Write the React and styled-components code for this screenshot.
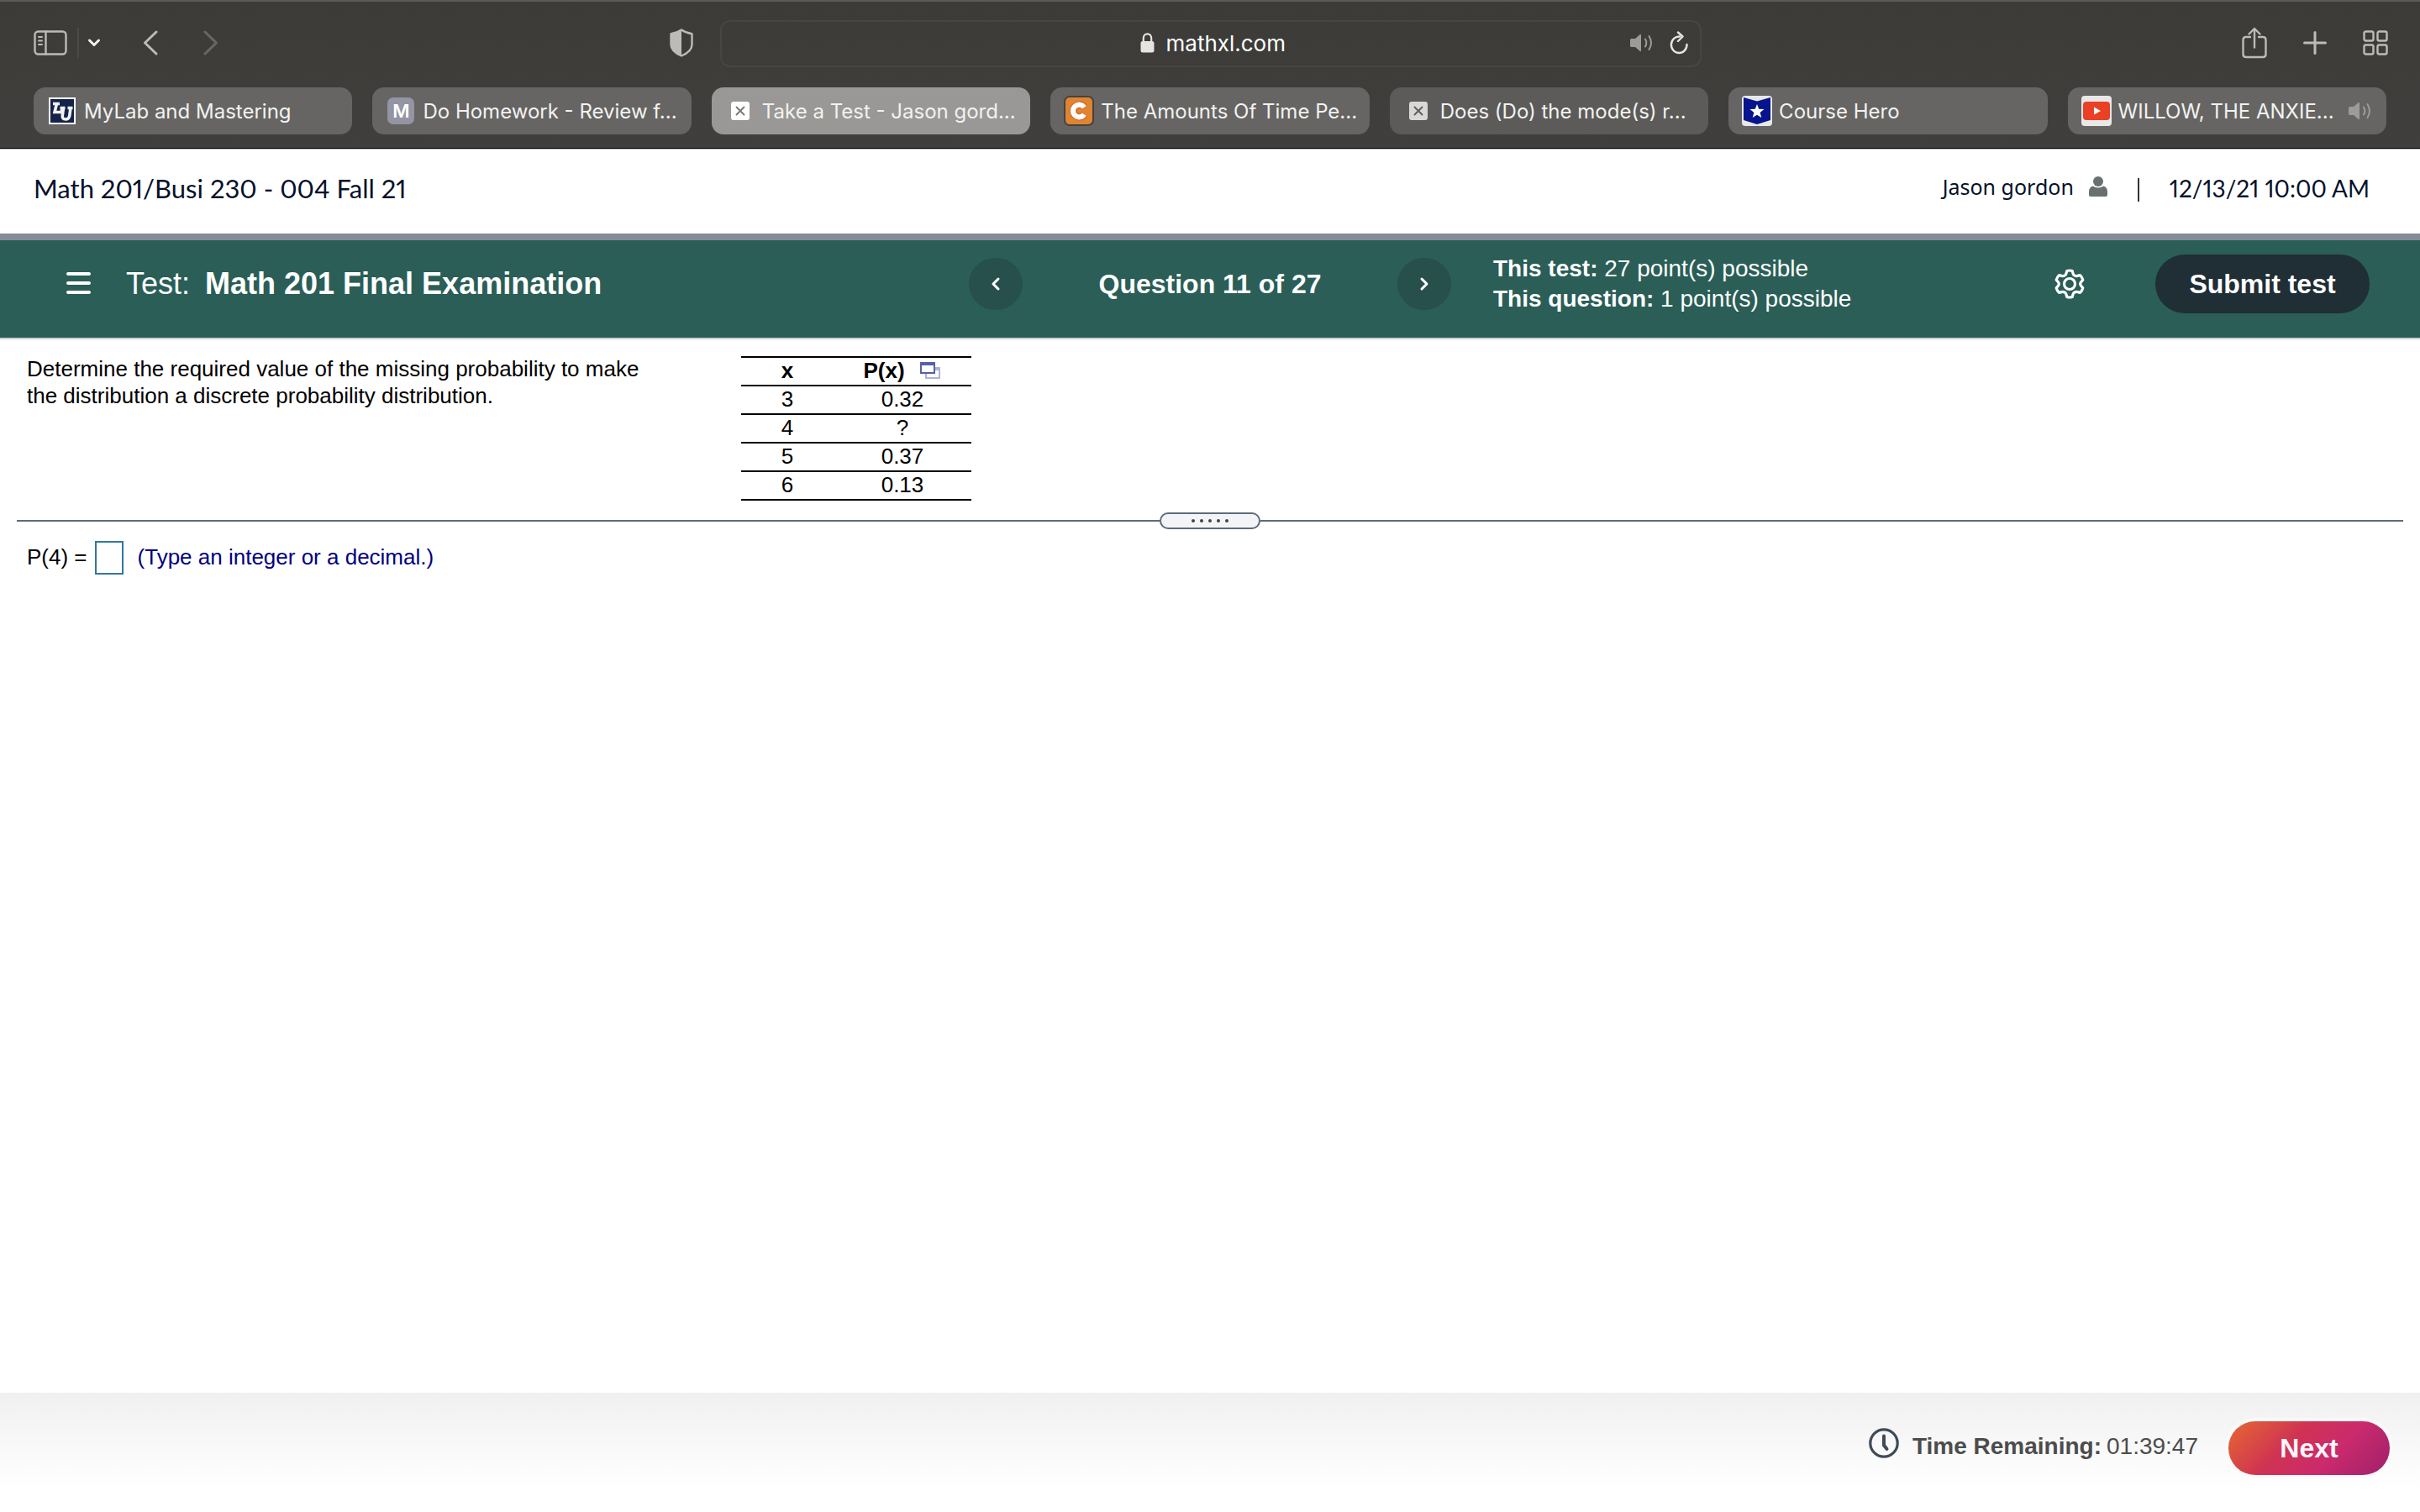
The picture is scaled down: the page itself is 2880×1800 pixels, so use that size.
import React, { useState } from 'react';
import styled, { createGlobalStyle } from 'styled-components';

const GlobalStyle = createGlobalStyle`
  * {
    box-sizing: border-box;
  }

  body {
    margin: 0;
    background: #fff;
    color: #000;
    font-family: "Liberation Sans", Arial, sans-serif;
    font-size: 26px;
  }

  button, input {
    font: inherit;
    color: inherit;
  }

  svg {
    display: block;
    flex-shrink: 0;
  }
`;

const Page = styled.div`
  min-height: 100vh;
  display: flex;
  flex-direction: column;
`;

/* Browser window */

const BrowserChrome = styled.header`
  height: 178px;
  background: linear-gradient(#3c3b38, #403f3d);
  border-top: 2px solid #5b5a58;
  border-bottom: 1px solid #bdbdbd;
  box-shadow: inset 0 -1px 0 #000;
  font-family: Inter, "Liberation Sans", sans-serif;
`;

const Toolbar = styled.div`
  height: 102px;
  padding: 0 38px 2px 40px;
  display: grid;
  grid-template-columns: 7fr 10fr 7fr;
  align-items: center;
`;

const ToolGroup = styled.div`
  display: flex;
  align-items: center;
  justify-content: ${({ $end }) => ($end ? 'flex-end' : 'flex-start')};
  gap: ${({ $gap }) => $gap || 0}px;
  padding-bottom: 2px;
`;

const IconButton = styled.button`
  display: flex;
  align-items: center;
  justify-content: center;
  padding: 0;
  border: none;
  background: none;
  color: ${({ $color }) => $color || '#bcbbb9'};
  cursor: pointer;
`;

const ToolDivider = styled.span`
  width: 2px;
  height: 36px;
  margin: 0 10px 0 12px;
  background: #4b4a48;
`;

const History = styled.div`
  display: flex;
  gap: 54px;
  margin-left: 50px;
`;

const Privacy = styled.div`
  margin-left: auto;
  margin-right: 32px;
`;

const AddressBar = styled.div`
  height: 56px;
  padding: 0 14px;
  border: 2px solid #474644;
  border-radius: 12px;
  display: grid;
  grid-template-columns: 1fr auto 1fr;
  align-items: center;
`;

const Address = styled.label`
  grid-column: 2;
  display: flex;
  align-items: center;
  gap: 14px;
  margin-left: 6px;
  padding-bottom: 2px;
  color: #e4e4e3;
`;

const AddressInput = styled.input`
  width: 144px;
  padding: 0;
  border: none;
  outline: none;
  background: none;
  color: #fff;
  font-size: 26px;
`;

const TabBar = styled.nav`
  display: flex;
  gap: 24px;
  padding: 0 40px;
`;

const Tab = styled.button`
  flex: 1 1 0;
  min-width: 0;
  height: 56px;
  padding: 0 18px;
  border: none;
  border-radius: 14px;
  display: flex;
  align-items: center;
  gap: 10px;
  background: ${({ $active, $dim }) => ($active ? '#999896' : $dim ? '#5c5b59' : '#666563')};
  color: #f2f2f1;
  font-size: 24px;
  text-align: left;
  white-space: nowrap;
  cursor: pointer;
`;

const TabTitle = styled.span`
  flex: 1;
`;

const Favicon = styled.span`
  width: 32px;
  height: 32px;
  flex-shrink: 0;
  display: flex;
  align-items: center;
  justify-content: center;
  border-radius: ${({ $radius }) => $radius || 0}px;
  background: ${({ $bg }) => $bg || 'transparent'};
  box-shadow: ${({ $ring }) => ($ring ? `0 0 0 2px ${$ring}` : 'none')};
  color: #fff;
  font-size: 22px;
  font-weight: 600;
`;

/* Course page */

const CourseHeader = styled.div`
  height: 108px;
  padding: 0 60px 8px 40px;
  border-bottom: 8px solid #858c95;
  display: flex;
  align-items: center;
  justify-content: space-between;
  color: #05112a;
  font-family: Lato, "Open Sans", sans-serif;
  font-variant-numeric: proportional-nums;
`;

const CourseName = styled.h1`
  margin: 0;
  font-size: 31px;
  font-weight: 400;
`;

const Account = styled.div`
  display: flex;
  align-items: center;
  font-size: 28px;
`;

const UserLink = styled.a`
  display: flex;
  align-items: center;
  gap: 18px;
  padding-bottom: 4px;
  color: inherit;
  font-family: "Noto Sans", sans-serif;
  font-size: 25px;
  text-decoration: none;
`;

const AccountDivider = styled.span`
  width: 2px;
  height: 28px;
  margin: 4px 36px 0;
  background: #333;
`;

const TestBar = styled.div`
  height: 118px;
  padding: 0 60px 12px;
  border-bottom: 2px solid #cdd0d9;
  background: #2a5e57;
  color: #fff;
  display: grid;
  grid-template-columns: 1fr auto 1fr;
  align-items: center;
`;

const TestName = styled.div`
  display: flex;
  align-items: center;
  gap: 42px;
  padding-left: 19px;
`;

const TestTitle = styled.h2`
  margin: 0;
  font-size: 36px;
  font-weight: 400;

  strong {
    margin-left: 8px;
  }
`;

const QuestionNav = styled.div`
  width: 574px;
  display: flex;
  align-items: center;
  justify-content: space-between;
  font-size: 32px;
  font-weight: 700;
`;

const RoundButton = styled.button`
  width: 64px;
  height: 62px;
  padding: 0;
  border: none;
  border-radius: 50%;
  background: #274f4c;
  color: #fff;
  display: flex;
  align-items: center;
  justify-content: center;
  cursor: pointer;
`;

const TestInfo = styled.div`
  display: flex;
  align-items: center;
  padding-left: 50px;
`;

const Points = styled.div`
  margin-right: auto;
  font-size: 28px;
  line-height: 36px;
`;

const SubmitButton = styled.button`
  width: 255px;
  height: 70px;
  margin-left: 84px;
  border: none;
  border-radius: 35px;
  background: #202e35;
  font-size: 32px;
  font-weight: 700;
  white-space: nowrap;
  cursor: pointer;
`;

const Question = styled.section`
  padding: 19px 32px 14px;
  display: flex;
  gap: 100px;
`;

const Prompt = styled.p`
  width: 750px;
  margin: 0;
  line-height: 32px;
`;

const DataTable = styled.table`
  width: 274px;
  margin-top: 1px;
  border-collapse: collapse;
  text-align: center;
  line-height: 30px;

  th, td {
    padding: 0 0 2px;
    border-top: 2px solid #000;
    border-bottom: 2px solid #000;
  }

  th:first-child {
    width: 110px;
  }
`;

const HeadCell = styled.span`
  display: flex;
  align-items: center;
  justify-content: center;
  gap: 18px;
  padding-right: 2px;
`;

const Splitter = styled.div`
  margin: 0 20px;
  height: 20px;
  display: flex;
  align-items: center;

  &::before, &::after {
    content: '';
    flex: 1;
    height: 2px;
    background: #5f6b7a;
  }
`;

const SplitHandle = styled.button`
  width: 120px;
  height: 20px;
  padding: 0;
  border: 2px solid #5f6b7a;
  border-radius: 10px;
  background: #f3f4f7;
  display: flex;
  align-items: center;
  justify-content: center;
  gap: 6px;
  cursor: row-resize;
`;

const Dot = styled.span`
  width: 4px;
  height: 4px;
  border-radius: 50%;
  background: #444;
`;

const Answer = styled.form`
  flex: 1;
  padding: 14px 32px;
  display: flex;
  align-items: flex-start;
  line-height: 38px;
`;

const AnswerInput = styled.input`
  width: 34px;
  height: 40px;
  margin: 0 17px 0 9px;
  padding: 0 4px;
  border: 2px solid #31789c;
  border-radius: 0;
  background: #fff;
`;

const Hint = styled.span`
  color: #000080;
`;

const Footer = styled.footer`
  height: 142px;
  padding: 34px 36px 0;
  display: flex;
  align-items: flex-start;
  justify-content: flex-end;
  background: linear-gradient(#f0f0f0, #fff 80%);
`;

const Timer = styled.div`
  height: 60px;
  display: flex;
  align-items: center;
  gap: 6px;
  margin-right: 36px;
  color: #4c4c4c;
  font-size: 28px;

  svg {
    margin: 0 10px 8px 0;
  }
`;

const NextButton = styled.button`
  width: 192px;
  height: 64px;
  border: none;
  border-radius: 32px;
  background: linear-gradient(135deg, #df5b3a 10%, #d03352 38%, #cb2a6d 64%, #a8226b 92%);
  box-shadow: 0 0 0 4px #fafafa;
  color: #fbf6fb;
  font-size: 32px;
  font-weight: 700;
  cursor: pointer;
`;

const stroke = { fill: 'none', stroke: 'currentColor', strokeLinecap: 'round', strokeLinejoin: 'round' };

const SidebarIcon = () => (
  <svg width="40" height="30" viewBox="0 0 40 30" {...stroke} strokeWidth="2.4">
    <rect x="1.5" y="1.5" width="37" height="27" rx="4" />
    <path d="M14.5 1.5v27" />
    <path d="M6 8h4M6 12.5h4M6 17h4" strokeWidth="2" />
  </svg>
);

const ChevronDown = () => (
  <svg width="16" height="12" viewBox="0 0 16 12" {...stroke} strokeWidth="3">
    <path d="M2.5 3 8 8.5 13.5 3" />
  </svg>
);

const BackIcon = () => (
  <svg width="18" height="30" viewBox="0 0 18 30" {...stroke} strokeWidth="3">
    <path d="M16 2 2.5 15 16 28" />
  </svg>
);

const ForwardIcon = () => (
  <svg width="18" height="30" viewBox="0 0 18 30" {...stroke} strokeWidth="3">
    <path d="M2 2l13.5 13L2 28" />
  </svg>
);

const ShieldIcon = () => (
  <svg width="28" height="34" viewBox="0 0 28 34" {...stroke} strokeWidth="2.4">
    <path d="M14 1.5C10.5 4 6 5.5 1.5 6.2V19c0 6.5 5.5 10.5 12.5 13.5 7-3 12.5-7 12.5-13.5V6.2C22 5.5 17.5 4 14 1.5z" />
    <path d="M14 1.5C10.5 4 6 5.5 1.5 6.2V19c0 6.5 5.5 10.5 12.5 13.5z" fill="currentColor" stroke="none" />
  </svg>
);

const LockIcon = () => (
  <svg width="17" height="24" viewBox="0 0 17 24" {...stroke}>
    <path d="M3.8 11V6.5a4.7 5.2 0 0 1 9.4 0V11" strokeWidth="2.2" />
    <rect x="0.5" y="10" width="16" height="13.5" rx="2.5" fill="currentColor" stroke="none" />
  </svg>
);

const SpeakerIcon = () => (
  <svg width="28" height="22" viewBox="0 0 28 22" {...stroke} strokeWidth="2">
    <path d="M1 7.5q0-1.500 1.500-1.500H7l5.500-4.800q1.500-1 1.500.6v18.400q0 1.600-1.500.6L7 16H2.500Q1 16 1 14.500z" fill="currentColor" stroke="none" />
    <path d="M19 6.5q2.600 4.500 0 9M23.500 3q5 8 0 16" />
  </svg>
);

const ReloadIcon = () => (
  <svg width="22" height="28" viewBox="0 0 22 28" {...stroke} strokeWidth="2.4">
    <path d="M12 6.5A9.3 9.8 0 1 0 20.5 16" />
    <path d="M10 1.5l5.500 5-5.500 5.500" />
  </svg>
);

const ShareIcon = () => (
  <svg width="30" height="38" viewBox="0 0 30 38" {...stroke} strokeWidth="2.4">
    <path d="M10 12H5q-3.500 0-3.500 3.500v17Q1.500 36 5 36h20q3.500 0 3.500-3.500v-17Q28.500 12 25 12h-5" />
    <path d="M15 24.500V2.500M8.500 8.500 15 2l6.500 6.500" />
  </svg>
);

const PlusIcon = () => (
  <svg width="28" height="28" viewBox="0 0 28 28" {...stroke} strokeWidth="3">
    <path d="M14 1.5v25M1.5 14h25" />
  </svg>
);

const GridIcon = () => (
  <svg width="30" height="30" viewBox="0 0 30 30" {...stroke} strokeWidth="2.4">
    <rect x="1.5" y="1.5" width="11" height="11" rx="2" />
    <rect x="17.5" y="1.5" width="11" height="11" rx="2" />
    <rect x="1.5" y="17.5" width="11" height="11" rx="2" />
    <rect x="17.5" y="17.5" width="11" height="11" rx="2" />
  </svg>
);

const LibertyIcon = () => (
  <svg width="32" height="32" viewBox="0 0 32 32">
    <rect x="1" y="1" width="30" height="30" fill="#14234a" stroke="#fff" strokeWidth="2" />
    <g fill="none" stroke="#f0f1f5" strokeWidth="3.6">
      <path d="M5 7.5h8M9.5 7.5 7 17.5h8.5V14" />
      <path d="M13.5 12.5h6M17.5 12.5l-1.200 9q-.5 4.500 3.700 4.500t4.800-4.500l1.200-9M22.500 12.500h6" />
    </g>
  </svg>
);

const CheggIcon = () => (
  <svg width="32" height="32" viewBox="0 0 32 32" fill="none">
    <path d="M22.5 11.8A7.3 7.3 0 1 0 22.5 20.2" stroke="#d9621d" strokeWidth="8.5" />
    <path d="M22.3 11.8A7.3 7.3 0 1 0 22.3 20.2" stroke="#fff" strokeWidth="6.2" />
  </svg>
);

const ClosedPageIcon = ({ fill, mark }) => (
  <svg width="22" height="22" viewBox="0 0 22 22">
    <rect width="22" height="22" rx="3" fill={fill} />
    <path d="M6.5 6.5l9 9M15.5 6.5l-9 9" stroke={mark} strokeWidth="1.8" strokeLinecap="round" />
  </svg>
);

const HeroIcon = () => (
  <svg width="32" height="32" viewBox="0 0 32 32">
    <path d="M0 0l16 4.5L32 0v27l-16 5-16-5z" fill="#08148c" />
    <path d="M16 8l2.2 5.8 6.3.3-4.9 3.9 1.7 6.1L16 20.7l-5.300 3.400 1.700-6.100-4.900-3.900 6.300-.3z" fill="#fff" />
  </svg>
);

const YoutubeIcon = () => (
  <svg width="32" height="22" viewBox="0 0 32 22">
    <rect width="32" height="22" rx="4" fill="#ea4025" />
    <path d="M13 6.5v9l8-4.500z" fill="#fff" />
  </svg>
);

const PersonIcon = () => (
  <svg width="22" height="24" viewBox="0 0 22 24" fill="#687170">
    <circle cx="11" cy="6" r="6" />
    <path d="M4.5 11.5q6.500 4 13 0Q22 13 22 18.500V22q0 2-2 2H2q-2 0-2-2v-3.500Q0 13 4.500 11.500z" />
  </svg>
);

const MenuIcon = () => (
  <svg width="29" height="28" viewBox="0 0 29 28" {...stroke} strokeWidth="4">
    <path d="M2 2h25M2 13h25M2 24h25" />
  </svg>
);

const SmallChevron = ({ right }) => (
  <svg width="12" height="18" viewBox="0 0 12 18" {...stroke} strokeWidth="3">
    <path d={right ? 'M3 3l6 6-6 6' : 'M9 3L3 9l6 6'} />
  </svg>
);

const GearIcon = () => (
  <svg width="36" height="36" viewBox="0 0 36 36" {...stroke} strokeWidth="3.2">
    <path d="M14.8 2.5q3.200-1 6.400 0l1 3.700q1.800 3 5.300 2.200l3-.8q2.500 2.400 3.300 5.600l-2 2.300q-2.200 2.500 0 5l2 2.300q-.8 3.200-3.300 5.600l-3-.8q-3.500-.8-5.300 2.200l-1 3.700q-3.200 1-6.400 0l-1-3.700q-1.800-3-5.300-2.200l-3 .8q-2.500-2.400-3.300-5.600l2-2.300q2.200-2.500 0-5l-2-2.300Q3 10 5.500 7.600l3 .8q3.500.8 5.300-2.200z" />
    <circle cx="18" cy="18" r="6.5" />
  </svg>
);

const PopupIcon = () => (
  <svg width="24" height="20" viewBox="0 0 24 20">
    <path d="M7 7h16v12H7z" fill="#fff" stroke="#adb4da" strokeWidth="2" />
    <path d="M18 6h6v4h-6z" fill="#adb4da" />
    <path d="M1 1h16v12H1z" fill="#fff" stroke="#5560a8" strokeWidth="2" />
    <path d="M0 0h18v4H0z" fill="#5560a8" />
  </svg>
);

const ClockIcon = () => (
  <svg width="36" height="36" viewBox="0 0 36 36" {...stroke} stroke="#3f4b5a" strokeWidth="3.2">
    <circle cx="18" cy="18" r="16.2" />
    <path d="M18 9.5v11l3.500 4.500" strokeWidth="4" />
  </svg>
);

const tabs = [
  { title: 'MyLab and Mastering', icon: <Favicon><LibertyIcon /></Favicon> },
  { title: 'Do Homework - Review f...', icon: <Favicon $bg="#9494a4" $radius={7}>M</Favicon> },
  { title: 'Take a Test - Jason gord...', active: true, icon: <Favicon><ClosedPageIcon fill="#fff" mark="#777" /></Favicon> },
  { title: 'The Amounts Of Time Pe...', icon: <Favicon $bg="#e08431" $radius={5} $ring="#444341"><CheggIcon /></Favicon> },
  { title: 'Does (Do) the mode(s) r...', dim: true, icon: <Favicon><ClosedPageIcon fill="#d8d8d7" mark="#5c5b59" /></Favicon> },
  { title: 'Course Hero', icon: <Favicon $bg="#e8e8e8" $radius={2} $ring="#e8e8e8"><HeroIcon /></Favicon> },
  { title: 'WILLOW, THE ANXIE...', audio: true, icon: <Favicon $bg="#e8e8e8" $radius={2} $ring="#e8e8e8"><YoutubeIcon /></Favicon> },
];

const rows = [
  ['3', '0.32'],
  ['4', '?'],
  ['5', '0.37'],
  ['6', '0.13'],
];

const Browser = () => (
  <BrowserChrome>
    <Toolbar>
      <ToolGroup>
        <IconButton aria-label="Sidebar"><SidebarIcon /></IconButton>
        <ToolDivider />
        <IconButton aria-label="Tab groups" $color="#f0f0f0"><ChevronDown /></IconButton>
        <History>
          <IconButton aria-label="Back"><BackIcon /></IconButton>
          <IconButton aria-label="Forward" $color="#686765"><ForwardIcon /></IconButton>
        </History>
        <Privacy>
          <IconButton aria-label="Privacy report"><ShieldIcon /></IconButton>
        </Privacy>
      </ToolGroup>
      <AddressBar>
        <Address>
          <LockIcon />
          <AddressInput type="text" aria-label="Address" defaultValue="mathxl.com" />
        </Address>
        <ToolGroup $end $gap={20}>
          <IconButton aria-label="Mute" $color="#9c9b99"><SpeakerIcon /></IconButton>
          <IconButton aria-label="Reload" $color="#e4e4e3"><ReloadIcon /></IconButton>
        </ToolGroup>
      </AddressBar>
      <ToolGroup $end $gap={43}>
        <IconButton aria-label="Share"><ShareIcon /></IconButton>
        <IconButton aria-label="New tab"><PlusIcon /></IconButton>
        <IconButton aria-label="Tab overview"><GridIcon /></IconButton>
      </ToolGroup>
    </Toolbar>
    <TabBar>
      {tabs.map((tab) => (
        <Tab key={tab.title} $active={tab.active} $dim={tab.dim}>
          {tab.icon}
          <TabTitle>{tab.title}</TabTitle>
          {tab.audio && <IconButton as="span" $color="#9c9b99"><SpeakerIcon /></IconButton>}
        </Tab>
      ))}
    </TabBar>
  </BrowserChrome>
);

const App = () => {
  const [answer, setAnswer] = useState('');

  return (
    <Page>
      <GlobalStyle />
      <Browser />
      <CourseHeader>
        <CourseName>Math 201/Busi 230 - 004 Fall 21</CourseName>
        <Account>
          <UserLink href="#">
            Jason gordon
            <PersonIcon />
          </UserLink>
          <AccountDivider />
          <time>12/13/21 10:00 AM</time>
        </Account>
      </CourseHeader>
      <TestBar>
        <TestName>
          <IconButton aria-label="Menu" $color="#fff"><MenuIcon /></IconButton>
          <TestTitle>
            Test: <strong>Math 201 Final Examination</strong>
          </TestTitle>
        </TestName>
        <QuestionNav>
          <RoundButton aria-label="Previous question"><SmallChevron /></RoundButton>
          <span>Question 11 of 27</span>
          <RoundButton aria-label="Next question"><SmallChevron right /></RoundButton>
        </QuestionNav>
        <TestInfo>
          <Points>
            <div><strong>This test:</strong> 27 point(s) possible</div>
            <div><strong>This question:</strong> 1 point(s) possible</div>
          </Points>
          <IconButton aria-label="Settings" $color="#fff"><GearIcon /></IconButton>
          <SubmitButton>Submit test</SubmitButton>
        </TestInfo>
      </TestBar>
      <Question>
        <Prompt>
          Determine the required value of the missing probability to make the distribution a
          discrete probability distribution.
        </Prompt>
        <DataTable>
          <thead>
            <tr>
              <th>x</th>
              <th>
                <HeadCell>
                  P(x)
                  <IconButton aria-label="Open data"><PopupIcon /></IconButton>
                </HeadCell>
              </th>
            </tr>
          </thead>
          <tbody>
            {rows.map(([x, p]) => (
              <tr key={x}>
                <td>{x}</td>
                <td>{p}</td>
              </tr>
            ))}
          </tbody>
        </DataTable>
      </Question>
      <Splitter>
        <SplitHandle aria-label="Resize">
          <Dot /><Dot /><Dot /><Dot /><Dot />
        </SplitHandle>
      </Splitter>
      <Answer onSubmit={(e) => e.preventDefault()}>
        <label htmlFor="answer">P(4) =</label>
        <AnswerInput id="answer" type="text" value={answer} onChange={(e) => setAnswer(e.target.value)} />
        <Hint>(Type an integer or a decimal.)</Hint>
      </Answer>
      <Footer>
        <Timer>
          <ClockIcon />
          <strong>Time Remaining:</strong>
          <span>01:39:47</span>
        </Timer>
        <NextButton>Next</NextButton>
      </Footer>
    </Page>
  );
};

export default App;
